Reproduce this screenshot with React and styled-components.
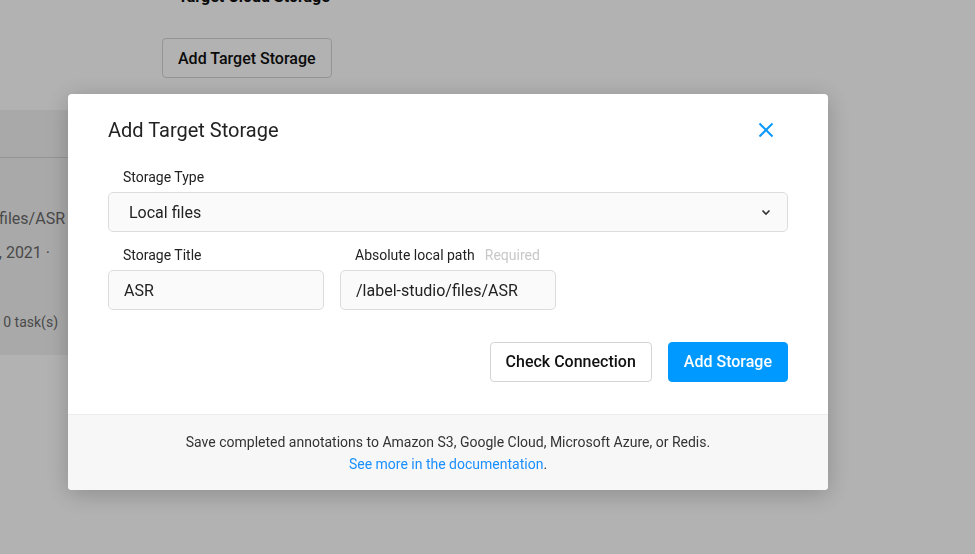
import styled, { createGlobalStyle } from "styled-components";

const GlobalStyle = createGlobalStyle`
  html, body {
    margin: 0;
    padding: 0;
    background: #ffffff;
    font-family: Roboto, "Liberation Sans", Arial, sans-serif;
    overflow: hidden;
  }
  * { box-sizing: border-box; }
`;

const Page = styled.div`
  width: 975px;
  height: 554px;
  display: flex;
  flex-direction: column;
  overflow: hidden;
`;

const TopSection = styled.div`
  display: flex;
  flex-direction: column;
  align-items: flex-start;
  padding-left: 162px;
  margin-top: -14px;
`;

const SectionHeading = styled.div`
  font-size: 16px;
  font-weight: 700;
  line-height: 22px;
  color: #111;
  margin-left: 16px;
`;

const OutlineButton = styled.button`
  margin-top: 30px;
  height: 40px;
  padding: 0 15px;
  border: 1px solid #d6d6d6;
  border-radius: 4px;
  background: #ffffff;
  font-family: inherit;
  font-size: 16px;
  font-weight: 500;
  color: #111;
`;

const StorageCard = styled.div`
  margin-top: 32px;
  margin-left: -232px;
  width: 300px;
  height: 245px;
  background: #f3f3f3;
  display: flex;
  flex-direction: column;
`;

const CardHeader = styled.div`
  height: 48px;
  border-bottom: 1px solid #d5d5d5;
`;

const CardLine = styled.div`
  text-align: right;
  padding-right: ${(p) => p.$right}px;
  margin-top: ${(p) => p.$top}px;
  font-size: ${(p) => p.$size}px;
  line-height: 20px;
  color: #6a6a6a;
  white-space: nowrap;
`;

const Overlay = styled.div`
  position: fixed;
  inset: 0;
  background: rgba(0, 0, 0, 0.3);
  padding: 94px 0 0 68px;
`;

const Modal = styled.div`
  width: 760px;
  background: #ffffff;
  border-radius: 4px;
  box-shadow: 0 4px 24px rgba(0, 0, 0, 0.22);
  overflow: hidden;
`;

const ModalBody = styled.div`
  padding: 24px 40px 32px;
`;

const ModalHeader = styled.div`
  display: flex;
  align-items: center;
  justify-content: space-between;
  height: 24px;
`;

const Title = styled.div`
  font-size: 20px;
  line-height: 24px;
  color: #222;
`;

const CloseButton = styled.button`
  border: 0;
  background: transparent;
  padding: 0;
  width: 16px;
  height: 16px;
  margin-right: 14px;
  display: flex;
  align-items: center;
  justify-content: center;
  color: #0a99ff;
`;

const Field = styled.div`
  display: flex;
  flex-direction: column;
  width: ${(p) => p.$width || "auto"};
  margin-top: ${(p) => p.$top}px;
`;

const Label = styled.div`
  display: flex;
  align-items: center;
  gap: 10px;
  font-size: 14px;
  line-height: 20px;
  color: #222;
  padding-left: 15px;
  margin-bottom: 5px;
`;

const Hint = styled.span`
  color: #c8c8c8;
`;

const SelectBox = styled.div`
  height: 40px;
  border: 1px solid #dcdcdc;
  border-radius: 5px;
  background: #fafafa;
  display: flex;
  align-items: center;
  justify-content: space-between;
  padding: 0 16px 0 20px;
  font-size: 16px;
  color: #222;
`;

const Row = styled.div`
  display: flex;
  gap: 16px;
`;

const Input = styled.div`
  height: 40px;
  border: 1px solid #dcdcdc;
  border-radius: 5px;
  background: #fafafa;
  display: flex;
  align-items: center;
  padding: 0 15px;
  font-size: 16px;
  color: #222;
`;

const Actions = styled.div`
  display: flex;
  justify-content: flex-end;
  gap: 16px;
  margin-top: 32px;
`;

const Button = styled.button`
  height: 40px;
  padding: 0 15px;
  border-radius: 4px;
  font-family: inherit;
  font-size: 16px;
  font-weight: 500;
  line-height: 38px;
  border: 1px solid ${(p) => (p.$primary ? "#0099ff" : "#d4d4d4")};
  background: ${(p) => (p.$primary ? "#0099ff" : "#ffffff")};
  color: ${(p) => (p.$primary ? "#ffffff" : "#111")};
`;

const Footer = styled.div`
  background: #f7f7f7;
  border-top: 1px solid #ececec;
  padding: 16px 40px 15px;
  text-align: center;
  font-size: 14px;
  line-height: 22px;
  color: #333;
`;

const DocLink = styled.a`
  color: #1a8fff;
  text-decoration: none;
`;

const CloseIcon = () => (
  <svg width="16" height="16" viewBox="0 0 16 16" fill="none">
    <path d="M1.5 1.5 L14.5 14.5 M14.5 1.5 L1.5 14.5" stroke="currentColor" strokeWidth="2" />
  </svg>
);

const Chevron = () => (
  <svg width="10" height="8" viewBox="0 0 10 8" fill="none">
    <path d="M1.5 2.5 L5 6 L8.5 2.5" stroke="#333" strokeWidth="1.6" />
  </svg>
);

const App = () => {
  return (
    <>
      <GlobalStyle />
      <Page>
        <TopSection>
          <SectionHeading>Target Cloud Storage</SectionHeading>
          <OutlineButton>Add Target Storage</OutlineButton>
        </TopSection>
        <StorageCard>
          <CardHeader />
          <CardLine $right={3} $top={51} $size={16}>
            /label-studio/files/ASR
          </CardLine>
          <CardLine $right={18} $top={14} $size={16}>
            Jun 15, 2021 ·
          </CardLine>
          <CardLine $right={10} $top={49} $size={14}>
            0 task(s)
          </CardLine>
        </StorageCard>
      </Page>
      <Overlay>
        <Modal>
          <ModalBody>
            <ModalHeader>
              <Title>Add Target Storage</Title>
              <CloseButton>
                <CloseIcon />
              </CloseButton>
            </ModalHeader>
            <Field $top={25}>
              <Label>Storage Type</Label>
              <SelectBox>
                Local files
                <Chevron />
              </SelectBox>
            </Field>
            <Row>
              <Field $top={13} $width="216px">
                <Label>Storage Title</Label>
                <Input>ASR</Input>
              </Field>
              <Field $top={13} $width="216px">
                <Label>
                  Absolute local path <Hint>Required</Hint>
                </Label>
                <Input>/label-studio/files/ASR</Input>
              </Field>
            </Row>
            <Actions>
              <Button>Check Connection</Button>
              <Button $primary>Add Storage</Button>
            </Actions>
          </ModalBody>
          <Footer>
            Save completed annotations to Amazon S3, Google Cloud, Microsoft Azure, or Redis.
            <br />
            <DocLink href="#">See more in the documentation</DocLink>.
          </Footer>
        </Modal>
      </Overlay>
    </>
  );
};

export default App;
